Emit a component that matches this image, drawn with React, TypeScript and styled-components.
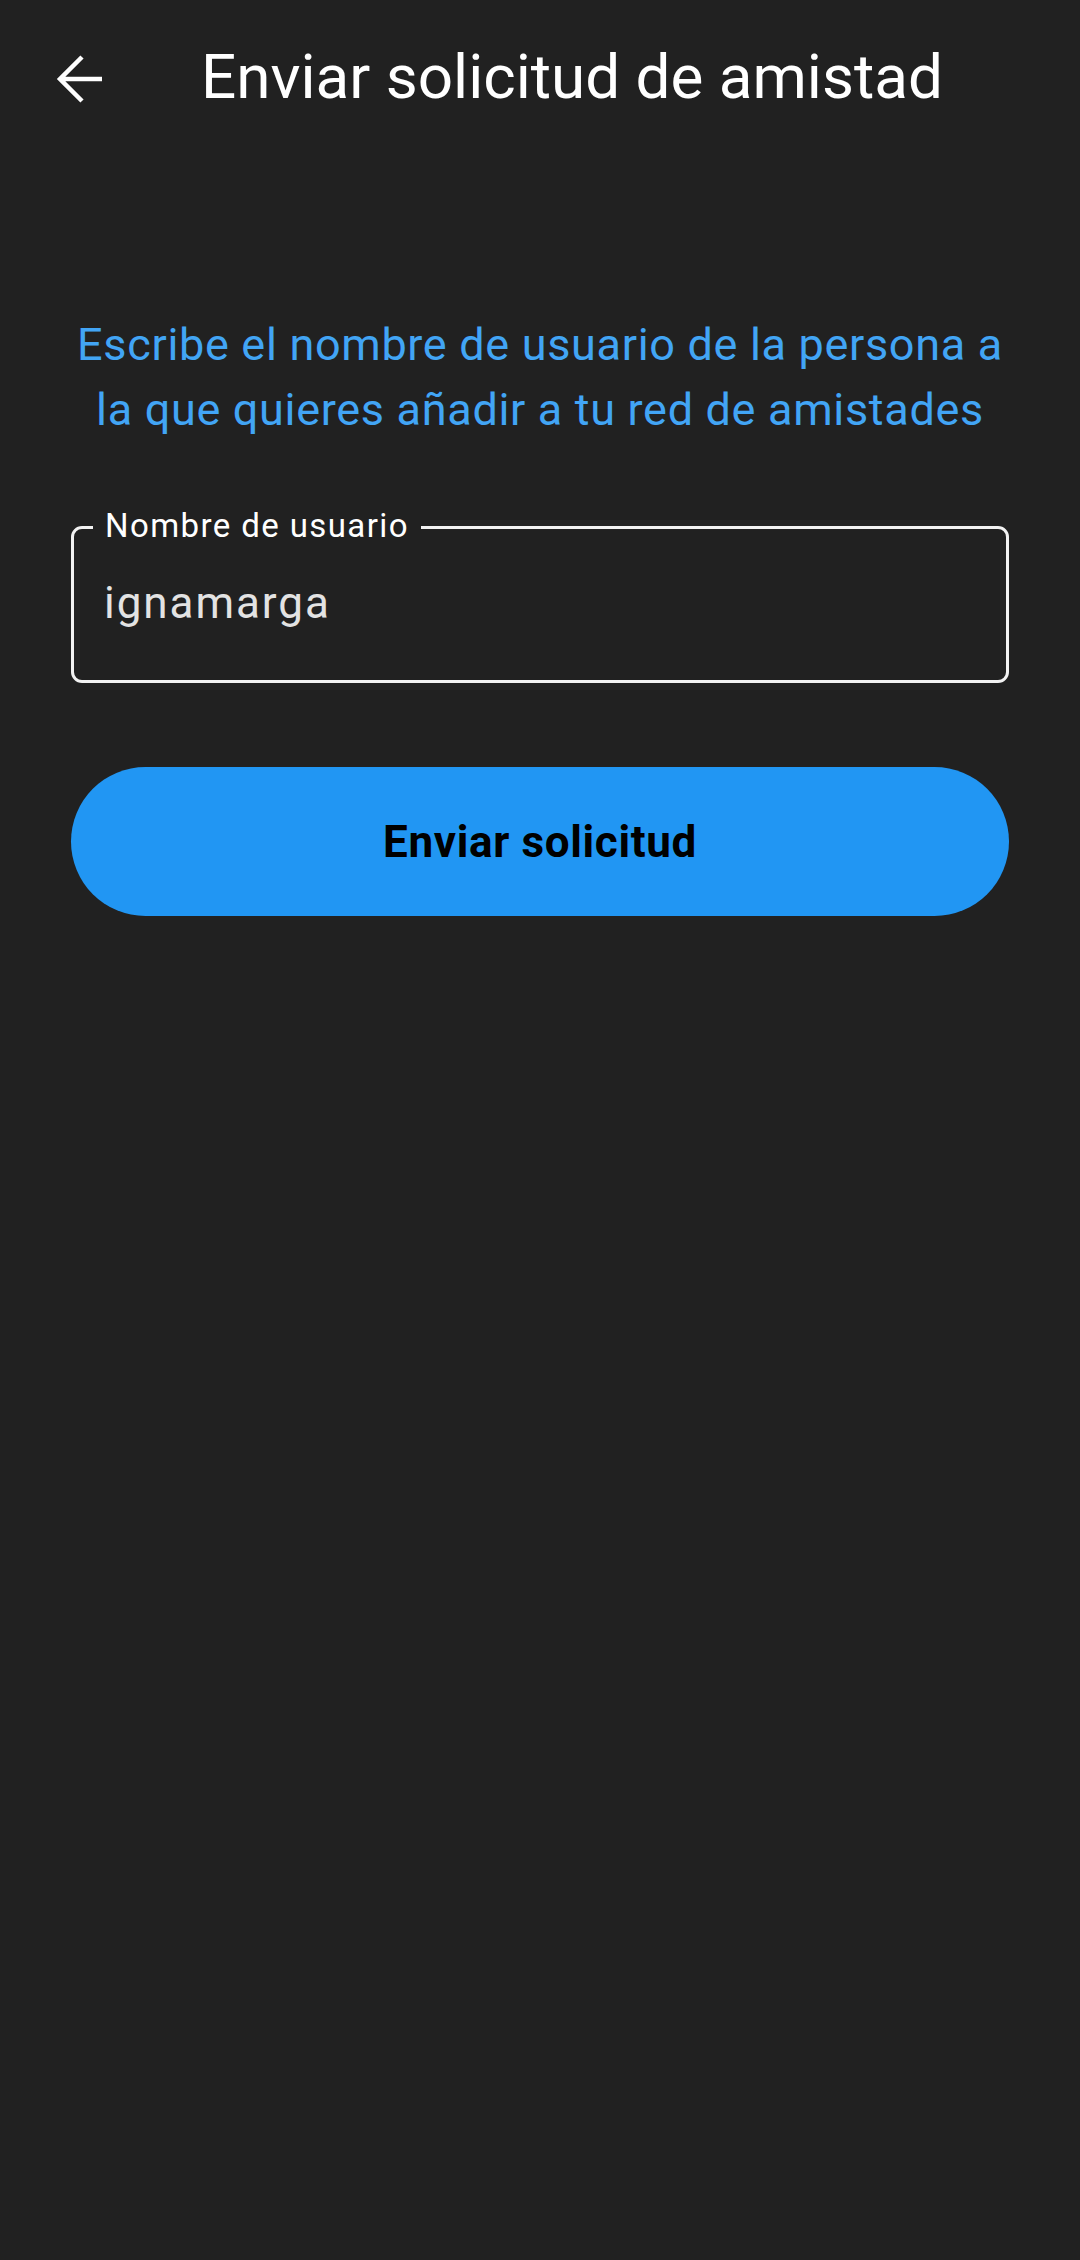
import React from "react";
import styled, { createGlobalStyle } from "styled-components";

const Global = createGlobalStyle`
  html, body {
    margin: 0;
    padding: 0;
    background: #212121;
  }
  body {
    font-family: Roboto, "Noto Sans", "Liberation Sans", sans-serif;
    -webkit-font-smoothing: antialiased;
  }
  * { box-sizing: border-box; }
`;

const Screen = styled.div`
  width: 1080px;
  min-height: 2260px;
  background: #212121;
  display: flex;
  flex-direction: column;
`;

const AppBar = styled.header`
  height: 158px;
  display: flex;
  align-items: center;
  padding-left: 43px;
`;

const BackButton = styled.button`
  width: 72px;
  height: 72px;
  padding: 0;
  border: none;
  background: transparent;
  display: flex;
  align-items: center;
  justify-content: center;
  cursor: pointer;
`;

const Title = styled.h1`
  margin: 0 0 0 86px;
  padding-bottom: 4px;
  font-family: Roboto, "Noto Sans", sans-serif;
  font-weight: 400;
  font-size: 62px;
  line-height: 72px;
  letter-spacing: 0;
  color: #ffffff;
  white-space: nowrap;
`;

const Body = styled.main`
  display: flex;
  flex-direction: column;
  padding: 154px 71px 0 71px;
`;

const Intro = styled.p`
  margin: 0;
  padding: 0;
  text-align: center;
  font-family: Roboto, "Noto Sans", sans-serif;
  font-size: 45px;
  line-height: 65px;
  letter-spacing: 0.68px;
  color: #42a5f5;
`;

const Field = styled.div`
  position: relative;
  margin-top: 84px;
  height: 157px;
  border: 3px solid #f2f2f2;
  border-radius: 11px;
  padding: 48px 30px 0 30px;
`;

const FieldLabel = styled.label`
  position: absolute;
  top: -21px;
  left: 19px;
  padding: 0 12px;
  background: #212121;
  font-family: Roboto, "Noto Sans", sans-serif;
  font-size: 33px;
  line-height: 36px;
  letter-spacing: 1.4px;
  color: #ffffff;
`;

const FieldInput = styled.input`
  width: 100%;
  height: 52px;
  padding: 0;
  border: none;
  outline: none;
  background: transparent;
  font-family: Roboto, "Noto Sans", sans-serif;
  font-size: 44px;
  line-height: 52px;
  letter-spacing: 1.95px;
  color: #e3e3e3;
`;

const PrimaryButton = styled.button`
  margin-top: 84px;
  height: 149px;
  border: none;
  border-radius: 75px;
  background: #2196f3;
  display: flex;
  align-items: center;
  justify-content: center;
  font-family: Roboto, "Noto Sans", sans-serif;
  font-weight: 700;
  font-size: 44px;
  line-height: 52px;
  letter-spacing: 0.65px;
  color: #000000;
  cursor: pointer;
`;

const BackArrow = () => (
  <svg width="72" height="72" viewBox="0 0 72 72" aria-hidden="true">
    <path
      d="M59 36 H17 M39 14 L17 36 L39 58"
      fill="none"
      stroke="#ffffff"
      strokeWidth="4.5"
      strokeLinecap="butt"
      strokeLinejoin="miter"
    />
  </svg>
);

export default function App() {
  return (
    <>
      <Global />
      <Screen>
        <AppBar>
          <BackButton aria-label="Volver">
            <BackArrow />
          </BackButton>
          <Title>Enviar solicitud de amistad</Title>
        </AppBar>
        <Body>
          <Intro>
            Escribe el nombre de usuario de la persona a la que quieres añadir a
            tu red de amistades
          </Intro>
          <Field>
            <FieldLabel htmlFor="username">Nombre de usuario</FieldLabel>
            <FieldInput id="username" defaultValue="ignamarga" />
          </Field>
          <PrimaryButton>Enviar solicitud</PrimaryButton>
        </Body>
      </Screen>
    </>
  );
}
